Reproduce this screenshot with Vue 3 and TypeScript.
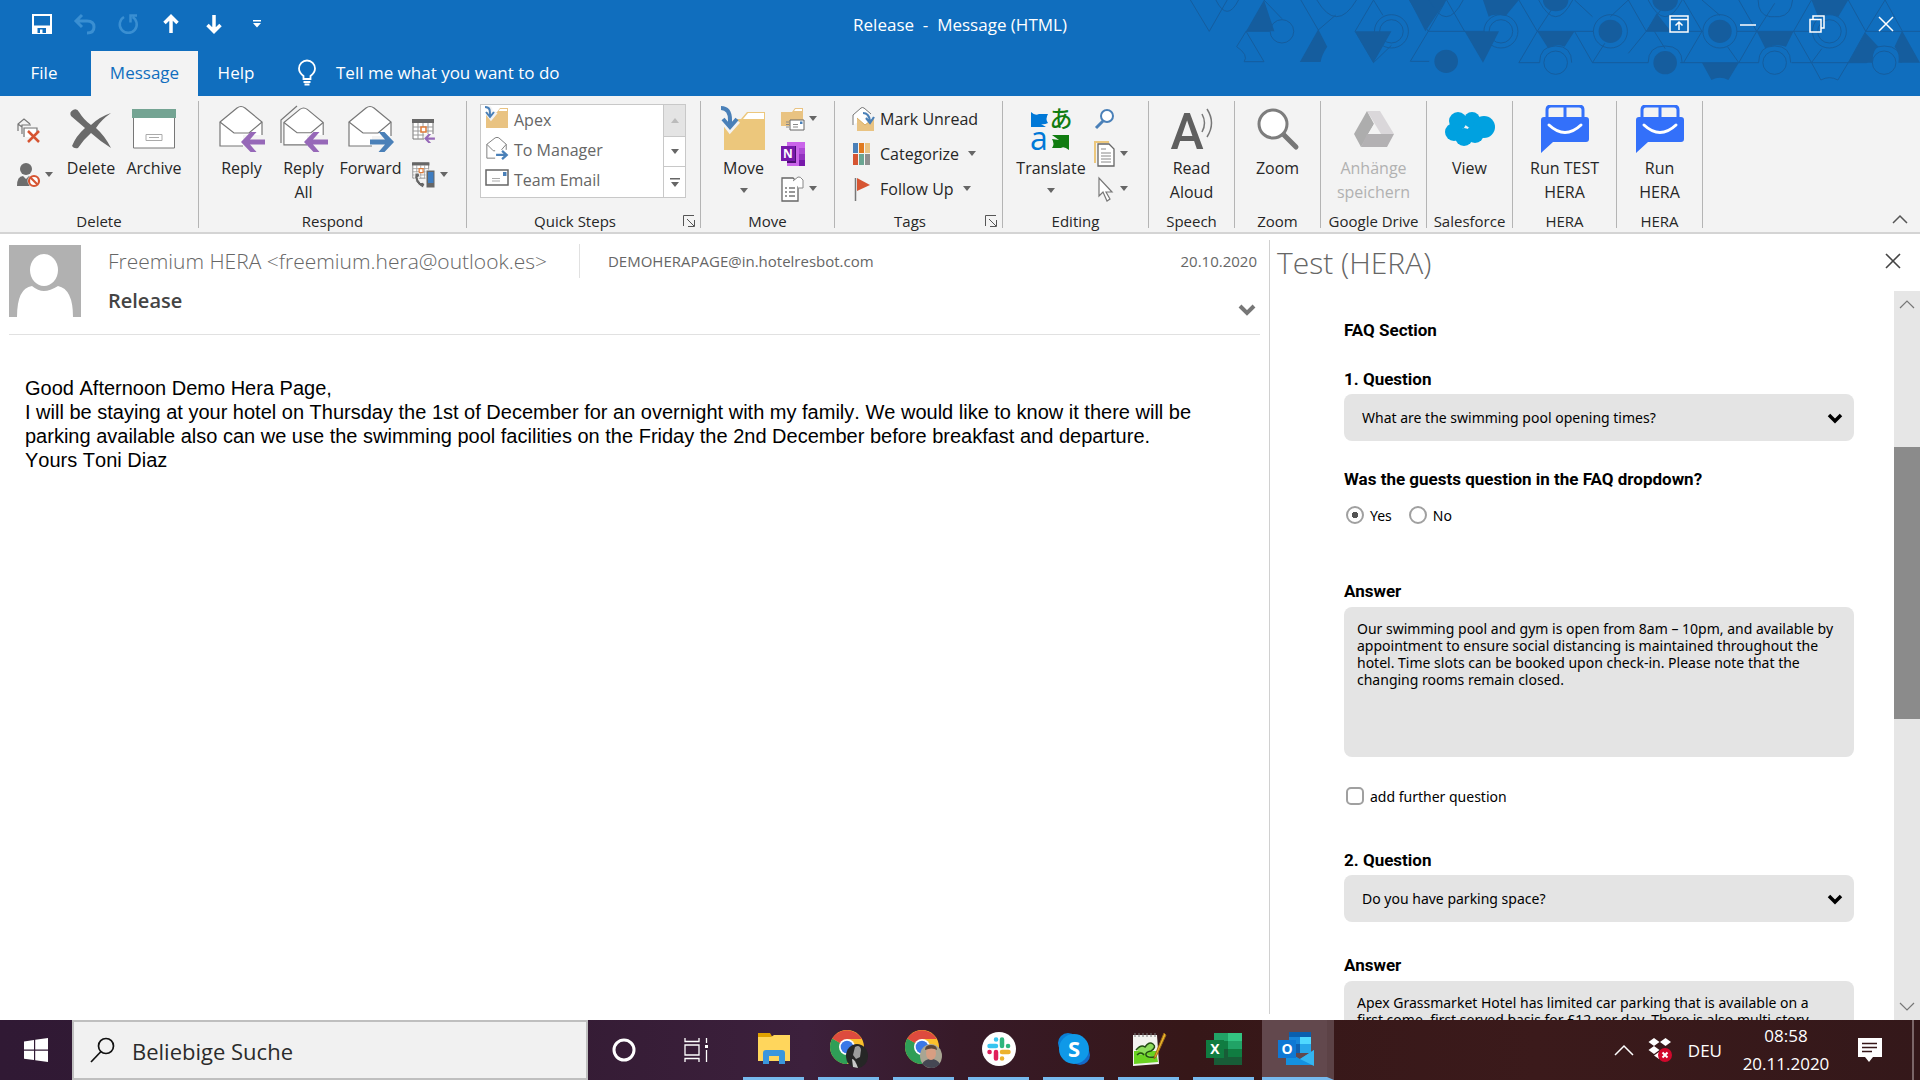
<script setup lang="ts">
import { ref } from 'vue'

interface TaskApp {
  id: string
  label: string
  active?: boolean
}

const quickSteps = [
  { id: 'folder-in', label: 'Apex' },
  { id: 'mail-forward', label: 'To Manager' },
  { id: 'card', label: 'Team Email' },
]

const taskApps: TaskApp[] = [
  { id: 'explorer', label: 'Explorer' },
  { id: 'chrome-a', label: 'Chrome' },
  { id: 'chrome-b', label: 'Chrome' },
  { id: 'slack', label: 'Slack' },
  { id: 'skype', label: 'Skype' },
  { id: 'notepad', label: 'Notepad++' },
  { id: 'excel', label: 'Excel' },
  { id: 'outlook', label: 'Outlook', active: true },
]

const question1 = ref('What are the swimming pool opening times?')
const question2 = ref('Do you have parking space?')
const inFaq = ref('yes')
const addFurther = ref(false)
const answer1 = ref(
  'Our swimming pool and gym is open from 8am – 10pm, and available by\nappointment to ensure social distancing is maintained throughout the\nhotel. Time slots can be booked upon check-in. Please note that the\nchanging rooms remain closed.',
)
const answer2 = ref(
  'Apex Grassmarket Hotel has limited car parking that is available on a\nfirst come, first served basis for £12 per day. There is also multi-story',
)
</script>

<template>
  <svg class="defs" aria-hidden="true">
    <symbol id="arrow-left" viewBox="0 0 24 20">
      <path d="M0 10L9.500 0H15.500L9 7.500H24V12.500H9L15.500 20H9.500Z" fill="#9668b8" />
    </symbol>
    <symbol id="arrow-right" viewBox="0 0 24 20">
      <path d="M24 10L14.500 0H8.500L15 7.500H0V12.500H15L8.500 20H14.500Z" fill="#4a80b8" />
    </symbol>
    <symbol id="caret" viewBox="0 0 8 5"><path d="M0 0H8L4 5Z" fill="#666" /></symbol>
    <symbol id="launcher" viewBox="0 0 12 12">
      <path d="M.5 11V.5H11M4 4l7 7M11.500 5v6.500H5" fill="none" stroke="#555" />
    </symbol>
    <symbol id="folder-in" viewBox="0 0 24 24">
      <path d="M1 6h11l3-4h8v20H1Z" fill="#e9c382" />
      <path d="M13.500 5l1.500-2h7v2Z" fill="#fff" />
      <path d="M1 1c5 0 5 3 5 9M2 7l4 5 5-6" fill="none" stroke="#f3f3f3" stroke-width="4" />
      <path d="M0 1c5 0 5 3 5 9M1 6l4 5 4-5" fill="none" stroke="#4a80b8" stroke-width="2" />
    </symbol>
    <symbol id="mail-forward" viewBox="0 0 24 26">
      <path d="M1 9L10 2q2-1 4 0l8 7v15H1Z" fill="#fff" stroke="#777" />
      <path d="M1 9l7 7h8l6-7" fill="none" stroke="#777" />
      <path d="M10 15h14v11H10Z" fill="#fff" />
      <path d="M11 20.500h10M17.500 16l5 4.500-5 4.500" fill="none" stroke="#4a80b8" stroke-width="2.500" />
    </symbol>
    <symbol id="card" viewBox="0 0 24 20">
      <path d="M1 2h22v15H1Z" fill="#fff" stroke="#666" stroke-width="1.500" />
      <path d="M7 10.500h8M7 13h8" stroke="#aaa" />
      <path d="M18 4h3.500v4H18Z" fill="#4a80b8" />
    </symbol>
    <symbol id="envelope" viewBox="0 0 46 48">
      <path d="M1 17L18 3q4-3 8 0l17 14v24H1Z" fill="#fff" stroke="#777" stroke-width="1.200" />
      <path d="M1 17l14 11h15l13-11" fill="none" stroke="#777" stroke-width="1.200" />
    </symbol>
    <symbol id="hera" viewBox="0 0 48 48">
      <path d="M6 13V5q0-4 4-4h28q4 0 4 4v8" fill="none" stroke="#3370fa" stroke-width="3" />
      <path d="M24 1v12" stroke="#3370fa" stroke-width="3" />
      <path d="M3 12h42q3 0 3 3v19q0 3-3 3H12L0 48V15q0-3 3-3Z" fill="#3370fa" />
      <path d="M8 20q16 15 32 0" fill="none" stroke="#fff" stroke-width="3" stroke-linecap="round" />
    </symbol>
    <symbol id="calendar" viewBox="0 0 24 22">
      <path d="M1 1h20v19H1Z" fill="#fff" stroke="#777" />
      <path d="M1 8h20M1 12h20M1 16h20M6 4v16M11 4v16M16 4v16" stroke="#999" />
      <path d="M0 0h22v4H0Z" fill="#666" />
      <path d="M9 8h5v5H9Z" fill="#fff" stroke="#e07b39" stroke-width="1.500" />
    </symbol>
    <symbol id="chrome" viewBox="0 0 34 34">
      <circle cx="17" cy="17" r="17" fill="#fbc02d" />
      <path d="M17 17L2.300 8.500A17 17 0 0 0 17 34l7-12Z" fill="#2f9e57" />
      <path d="M2.300 8.500A17 17 0 0 1 31.700 9H17v8Z" fill="#dd4b3e" />
      <circle cx="17" cy="17" r="8" fill="#fff" />
      <circle cx="17" cy="17" r="6.300" fill="#3b78e7" />
    </symbol>
  </svg>

  <div class="app">
    <header class="top">
      <svg class="pattern" viewBox="0 0 1568 288" preserveAspectRatio="none" aria-hidden="true">
        <g fill="#155d9e">
          <path d="M178 0L140 94H200ZM293 88L254 186H298Q300 165 312 140ZM371 94H448L410 188ZM486 0H565L520 94ZM603 94H676L642 188ZM642 0H718L690 48Q664 40 654 50ZM757 94H836L815 140Q796 130 780 145ZM1010 40L988 94H1040ZM1222 94H1300L1284 140Q1260 130 1240 145ZM1338 0H1416L1395 50Q1376 35 1352 50ZM1452 98L1416 188H1468Q1466 150 1480 140ZM1530 92L1514 140Q1526 160 1522 188H1568ZM1106 188H1184L1162 240Q1144 226 1126 240Z" />
          <ellipse cx="564" cy="184" rx="25" ry="35" />
          <ellipse cx="912" cy="94" rx="25" ry="35" />
          <ellipse cx="1028" cy="188" rx="25" ry="35" />
          <ellipse cx="1144" cy="94" rx="25" ry="35" />
          <ellipse cx="796" cy="0" rx="27" ry="34" />
          <ellipse cx="1028" cy="0" rx="27" ry="34" />
        </g>
        <g class="pattern-lines" fill="none" stroke="#155d9e">
          <path d="M22 0L62 94L100 0M178 0L216 56M256 0L293 90L330 45M410 0L371 94L410 188L448 136M486 0L526 94L488 184H528M410 0L430 46M526 94L560 10M526 94H645M565 0L603 94M718 0L757 94L718 188H762M757 94H876M836 0L874 50M757 94L796 10M950 0L988 94L950 160M950 0L912 50M988 94L1028 10M988 94H1108M836 94L874 188H992M874 188L900 130M1028 146L1005 94M1060 188H1226M1106 0L1144 46M1067 0L1106 94L1067 188M1180 94H1340M1184 0L1222 94L1184 188L1160 140M1222 94L1260 10M1300 94L1338 188H1296M1338 0L1300 94M1338 188H1455M1338 188L1360 146M1416 0L1453 94L1416 188L1394 240Q1376 226 1358 240L1338 188M1494 0L1453 94H1568M1494 0L1530 92M140 94L120 140Q146 165 136 185H178L140 94H190" />
          <ellipse cx="216" cy="94" rx="25" ry="35" />
          <ellipse cx="448" cy="94" rx="25" ry="35" />
          <ellipse cx="448" cy="94" rx="36" ry="50" />
          <ellipse cx="680" cy="94" rx="25" ry="35" />
          <ellipse cx="680" cy="94" rx="36" ry="50" />
          <ellipse cx="912" cy="94" rx="36" ry="50" />
          <ellipse cx="1144" cy="94" rx="36" ry="50" />
          <ellipse cx="1376" cy="94" rx="25" ry="35" />
          <ellipse cx="1376" cy="94" rx="36" ry="50" />
          <ellipse cx="796" cy="188" rx="25" ry="35" />
          <ellipse cx="1260" cy="188" rx="25" ry="35" />
          <ellipse cx="1492" cy="188" rx="25" ry="35" />
          <path d="M76 0q24 68 48 0M290 0q42 100 84 0M528 0q36 100 72 0M760 0q36 100 72 0M992 0q36 100 72 0M1225 0q0 45 25 50q-5 0 20 0q25-5 28-50M762 188q0-50 34-50t34 50M992 188q0-50 36-50t36 50M1226 188q0-50 34-50t34 50M1456 188q0-50 36-50t36 50" />
        </g>
      </svg>

      <div class="title-row">
        <div class="qat">
          <button aria-label="Save"><svg width="20" height="20" viewBox="0 0 20 20"><path d="M1 1h18v18H1Z" fill="none" stroke="#fff" stroke-width="2" /><path d="M1 11.500h18V19H1Z" fill="#fff" /><path d="M5.500 14h8.500v5H5.500Z" fill="#106ebe" /><path d="M8 15.500h2.500V19H8Z" fill="#fff" /></svg></button>
          <button aria-label="Undo"><svg width="22" height="20" viewBox="0 0 22 20"><path d="M8 1L2 7l6 6M2 7h11q7 0 7 6t-7 6" fill="none" stroke="#3a8fd2" stroke-width="3" /></svg></button>
          <button aria-label="Redo"><svg width="20" height="20" viewBox="0 0 20 20"><path d="M6 3A8.500 8.500 0 1 0 14.500 3M19 1.500h-6.500v7" fill="none" stroke="#3a8fd2" stroke-width="2.500" /></svg></button>
          <button aria-label="Previous"><svg width="16" height="20" viewBox="0 0 16 20"><path d="M8 19V4M1.500 9L8 2.500 14.500 9" fill="none" stroke="#fff" stroke-width="3.500" /></svg></button>
          <button aria-label="Next"><svg width="16" height="20" viewBox="0 0 16 20"><path d="M8 1v15M1.500 11L8 17.500l6.500-6.500" fill="none" stroke="#fff" stroke-width="3.500" /></svg></button>
          <button aria-label="Customize"><svg width="8" height="8" viewBox="0 0 8 8"><path d="M0 0h8v1.500H0ZM0 3h8L4 7.500Z" fill="#fff" /></svg></button>
        </div>
        <h1 class="window-title">Release&nbsp; -&nbsp; Message (HTML)</h1>
        <div class="window-buttons">
          <button aria-label="Ribbon options"><svg width="20" height="18" viewBox="0 0 20 18"><path d="M1 1h18v16H1ZM1 4.500h18M10 15V7.500M6.500 10.500L10 7l3.500 3.500" fill="none" stroke="#fff" stroke-width="1.500" /></svg></button>
          <button aria-label="Minimize"><svg width="16" height="18" viewBox="0 0 16 18"><path d="M0 10h16" stroke="#fff" stroke-width="1.500" /></svg></button>
          <button aria-label="Restore"><svg width="16" height="18" viewBox="0 0 16 18"><path d="M1 4.500h11V17H1ZM4 4V1h11v12h-3" fill="none" stroke="#fff" stroke-width="1.500" /></svg></button>
          <button aria-label="Close"><svg width="16" height="16" viewBox="0 0 16 16"><path d="M1 1l14 14M15 1L1 15" stroke="#fff" stroke-width="1.500" /></svg></button>
        </div>
      </div>

      <nav class="tabs">
        <button class="tab file">File</button>
        <button class="tab selected">Message</button>
        <button class="tab help">Help</button>
        <button class="tell">
          <svg width="18" height="26" viewBox="0 0 18 26"><path d="M5.500 19v-3Q1 12.500 1 8.500a8 8 0 0 1 16 0q0 4-4.500 7.500v3ZM5.500 22h7M6.500 24.500h5" fill="none" stroke="#fff" stroke-width="1.800" /></svg>
          <span>Tell me what you want to do</span>
        </button>
      </nav>
    </header>

    <section class="ribbon">
      <div class="group g-delete">
        <div class="tools">
          <div class="stack two">
            <button aria-label="Ignore"><svg width="24" height="26" viewBox="0 0 24 26"><path d="M1 14V7l6-5 6 5M1 7l4 3M5 17V8h9M7 20v-9h13v4" fill="none" stroke="#777" stroke-width="1.200" /><path d="M8 12h11v8H8Z" fill="#fff" /><path d="M11 14l11 11M22 14L11 25" stroke="#d65532" stroke-width="2.500" /></svg></button>
            <button aria-label="Junk"><svg width="24" height="26" viewBox="0 0 24 26"><circle cx="9" cy="7" r="6" fill="#6d6d6d" /><path d="M0 24q0-10 6-10l3 3 3-3q5 0 5 10Z" fill="#6d6d6d" /><circle cx="17" cy="19" r="6.500" fill="#f3f3f3" /><circle cx="17" cy="19" r="5" fill="#fff" stroke="#d65532" stroke-width="2.200" /><path d="M13.500 15.500l7 7" stroke="#d65532" stroke-width="2.200" /></svg><svg class="caret"><use href="#caret" /></svg></button>
          </div>
          <button class="big w66"><svg width="42" height="40" viewBox="0 0 42 40"><path d="M3 1q4-2 6 2 5 8 12 13Q29 8 41 4 31 11 26 19q9 8 15 20Q31 33 21 24 13 31 8 39q-4 1-6-2Q6 27 15 19 8 13 1 7q-2-4 2-6Z" fill="#6a6a6a" /></svg><span>Delete</span></button>
          <button class="big w60"><svg width="44" height="40" viewBox="0 0 44 40"><path d="M1.500 8h41v31h-41Z" fill="#fff" stroke="#777" /><path d="M0 0h44v9H0Z" fill="#74a493" /><path d="M14 25.500h16v6H14Z" fill="#fff" stroke="#aaa" /><path d="M17 28.500h10" stroke="#aaa" /></svg><span>Archive</span></button>
        </div>
        <div class="caption">Delete</div>
      </div>

      <div class="group g-respond">
        <div class="tools">
          <button class="big w61"><svg width="46" height="48" viewBox="0 0 46 48"><use href="#envelope" width="46" height="48" /><path d="M24 30h20v14H24Z" fill="#f3f3f3" /><use href="#arrow-left" x="22" y="27" width="24" height="20" /></svg><span>Reply</span></button>
          <button class="big w63"><svg width="48" height="48" viewBox="0 0 48 48"><path d="M1 38V15L17 1" fill="none" stroke="#777" stroke-width="1.200" /><use href="#envelope" x="3" y="1" width="43" height="46" /><path d="M27 30h20v14H27Z" fill="#f3f3f3" /><use href="#arrow-left" x="24" y="27" width="24" height="20" /></svg><span>Reply<br />All</span></button>
          <button class="big w71"><svg width="46" height="48" viewBox="0 0 46 48"><use href="#envelope" width="46" height="48" /><path d="M24 31h20v12H24Z" fill="#f3f3f3" /><use href="#arrow-right" x="22" y="27" width="24" height="20" /></svg><span>Forward</span></button>
          <div class="stack two respond-stack">
            <button aria-label="Meeting"><svg width="24" height="26" viewBox="0 0 24 26"><use href="#calendar" y="2" width="24" height="22" /><path d="M12 17h12v9H12Z" fill="#f3f3f3" /><use href="#arrow-left" x="12" y="17" width="11" height="9" /></svg></button>
            <button aria-label="More"><svg width="24" height="28" viewBox="0 0 24 28"><use href="#calendar" x="0" y="1" width="19" height="18" /><path d="M3 12q-2 10 8 15l2-4-3-2-1 1q-3-3-3-6h2l-1-4Z" fill="#666" stroke="#f3f3f3" /><path d="M14 9h9v18h-9Z" fill="#666" stroke="#f3f3f3" /><path d="M16 11h5.500v11H16Z" fill="#3f7dc0" /></svg><svg class="caret"><use href="#caret" /></svg></button>
          </div>
        </div>
        <div class="caption">Respond</div>
      </div>

      <div class="group g-quick">
        <div class="tools">
          <div class="gallery">
            <ul>
              <li v-for="step in quickSteps" :key="step.id">
                <button><svg width="24" height="24"><use :href="'#' + step.id" /></svg><span>{{ step.label }}</span></button>
              </li>
            </ul>
            <div class="gallery-nav">
              <button class="off" aria-label="Scroll up"><svg width="8" height="5" viewBox="0 0 8 5"><path d="M0 5h8L4 0Z" fill="#bbb" /></svg></button>
              <button aria-label="Scroll down"><svg width="8" height="5"><use href="#caret" /></svg></button>
              <button aria-label="More steps"><svg width="10" height="9" viewBox="0 0 10 9"><path d="M0 0h10v1.500H0ZM1 4h8L5 9Z" fill="#666" /></svg></button>
            </div>
          </div>
        </div>
        <div class="caption with-launcher"><span>Quick Steps</span><button aria-label="Quick Steps settings"><svg width="12" height="12"><use href="#launcher" /></svg></button></div>
      </div>

      <div class="group g-move">
        <div class="tools">
          <button class="big w61"><svg width="46" height="46" viewBox="0 0 46 46"><path d="M3 13h17l6-7h18v38H3Z" fill="#ecc77c" /><path d="M22 13l5-6h16v6Z" fill="#fff" /><path d="M1 2q8 0 8 12v6M3 14l6 8 7-8" fill="none" stroke="#f3f3f3" stroke-width="8" /><path d="M0 2q9 0 9 12v6M2 13l7 8 7-8" fill="none" stroke="#4a80b8" stroke-width="4" /></svg><span>Move</span><svg class="caret"><use href="#caret" /></svg></button>
          <div class="stack three">
            <button aria-label="Rules"><svg width="24" height="24" viewBox="0 0 24 24"><path d="M0 5h11l3-4h8v18H0Z" fill="#e9c382" /><path d="M13 4l1.500-2H21v2Z" fill="#fff" /><path d="M9 13h14v10H9Z" fill="#fff" stroke="#666" /><path d="M12 17.500h5M12 20h5M5 15h3M5 17.500h3M5 20h3" stroke="#888" /><path d="M19 14.500h2.500v2.500H19Z" fill="#4a80b8" /></svg><svg class="caret"><use href="#caret" /></svg></button>
            <button aria-label="OneNote"><svg width="24" height="24" viewBox="0 0 24 24"><path d="M6 0h18v24H6Z" fill="#ca64ea" /><path d="M18 6h6v6h-6Z" fill="#ae4bd5" /><path d="M18 12h6v6h-6Z" fill="#9332bf" /><path d="M18 18h6v6h-6Z" fill="#7719aa" /><path d="M6 4h9v17H6Z" fill="#4c0d74" /><path d="M0 4h14v15H0Z" fill="#7719aa" /><text x="7" y="16" class="icon-letter" font-size="12">N</text></svg></button>
            <button aria-label="Actions"><svg width="24" height="26" viewBox="0 0 24 26"><path d="M1 2h11l5 5v18H1Z" fill="#fff" stroke="#666" stroke-width="1.300" /><path d="M8 12h6M8 16h6M8 20h6M4 12h2M4 16h2M4 20h2" stroke="#777" stroke-width="1.500" /><path d="M12 5l5-4q2-1 5 3v8h-4" fill="#fff" stroke="#888" /></svg><svg class="caret"><use href="#caret" /></svg></button>
          </div>
        </div>
        <div class="caption">Move</div>
      </div>

      <div class="group g-tags">
        <div class="tools">
          <div class="stack three text-rows">
            <button><svg width="24" height="26" viewBox="0 0 24 26"><path d="M2 19V9l8-7q1-1 3 0l7 6" fill="#fff" stroke="#777" /><path d="M6 12h17v13H6Z" fill="#e9c382" /><path d="M6 12l8 7 9-7" fill="#fff" stroke="#d9ad62" /><path d="M12 7q6 0 7 8M15 12l4 5 4-6" fill="none" stroke="#4a80b8" stroke-width="2.200" /></svg><span>Mark Unread</span></button>
            <button><svg width="24" height="24" viewBox="0 0 24 24"><path d="M2 1h5v10H2Z" fill="#4a80b8" /><path d="M8 1h5v10H8Z" fill="#e07a1f" /><path d="M14 1h5v10h-5Z" fill="#e9c382" /><path d="M2 12h5v11H2Z" fill="#d65532" /><path d="M8 12h5v11H8Z" fill="#6aa592" /><path d="M14 12h5v11h-5Z" fill="#8f8f8f" /></svg><span>Categorize</span><svg class="caret"><use href="#caret" /></svg></button>
            <button><svg width="24" height="24" viewBox="0 0 24 24"><path d="M4.500 1v23" stroke="#777" stroke-width="1.500" /><path d="M6 1l13 7-13 6Z" fill="#d65532" /></svg><span>Follow Up</span><svg class="caret"><use href="#caret" /></svg></button>
          </div>
        </div>
        <div class="caption with-launcher"><span>Tags</span><button aria-label="Tags settings"><svg width="12" height="12"><use href="#launcher" /></svg></button></div>
      </div>

      <div class="group g-editing">
        <div class="tools">
          <button class="big w72"><svg width="42" height="46" viewBox="0 0 42 46"><path d="M1 6q4 4 8 2h9q-3 5 0 9-4 2-7 1l5 3H1Z" fill="#0078d7" /><text x="31" y="21" text-anchor="middle" font-family="Noto Sans CJK JP" font-weight="500" font-size="23" fill="#107c10">あ</text><text x="9" y="44" text-anchor="middle" font-family="Open Sans" font-weight="400" font-size="32" fill="#0078d7">a</text><path d="M22 29h17v15q-5-4-8-2h-9q3-4 0-9l7 1Z" fill="#107c10" /></svg><span>Translate</span><svg class="caret"><use href="#caret" /></svg></button>
          <div class="stack three">
            <button aria-label="Find"><svg width="22" height="22" viewBox="0 0 22 22"><circle cx="13" cy="8" r="6" fill="#fff" stroke="#4a80b8" stroke-width="2" /><path d="M9 13l-7 7" stroke="#4a80b8" stroke-width="3" /></svg></button>
            <button aria-label="Related"><svg width="22" height="26" viewBox="0 0 22 26"><path d="M1 22V1h14" fill="none" stroke="#ecc77c" stroke-width="2" /><path d="M4 3h11l5 5v17H4Z" fill="#fff" stroke="#666" stroke-width="1.300" /><path d="M7 8h5M7 12h10M7 15h10M7 18h10M7 21h10" stroke="#888" /></svg><svg class="caret"><use href="#caret" /></svg></button>
            <button aria-label="Select"><svg width="22" height="26" viewBox="0 0 22 26"><path d="M5 2v18l4-4 4 9 3-2-4-7h6Z" fill="#fff" stroke="#777" stroke-width="1.200" /></svg><svg class="caret"><use href="#caret" /></svg></button>
          </div>
        </div>
        <div class="caption">Editing</div>
      </div>

      <div class="group g-86">
        <div class="tools">
          <button class="big fill"><svg width="44" height="48" viewBox="0 0 44 48"><text x="17" y="44" text-anchor="middle" font-family="Roboto" font-weight="500" font-size="50" fill="#5f5f5f">A</text><path d="M32 9q5 9 0 18M37 4q9 14 0 28" fill="none" stroke="#777" stroke-width="1.500" /></svg><span>Read<br />Aloud</span></button>
        </div>
        <div class="caption">Speech</div>
      </div>
      <div class="group g-86">
        <div class="tools">
          <button class="big fill"><svg width="42" height="42" viewBox="0 0 42 42"><path d="M25 25l14 14" stroke="#777" stroke-width="5" stroke-linecap="round" /><circle cx="16" cy="16" r="14" fill="#fff" stroke="#7d7d7d" stroke-width="3" /></svg><span>Zoom</span></button>
        </div>
        <div class="caption">Zoom</div>
      </div>
      <div class="group g-106">
        <div class="tools">
          <button class="big fill" disabled><svg width="42" height="38" viewBox="0 0 42 38"><path d="M14 1L1 24l7 13 13-23Z" fill="#adadad" /><path d="M14 1h13l14 23H28Z" fill="#dad7da" /><path d="M14 24h27l-7 13H8Z" fill="#b3b1b3" /><path d="M21 14l6 10H15Z" fill="#f3f3f3" /></svg><span>Anhänge<br />speichern</span></button>
        </div>
        <div class="caption">Google Drive</div>
      </div>
      <div class="group g-86">
        <div class="tools">
          <button class="big fill"><svg width="50" height="36" viewBox="0 0 50 36"><g fill="#00a1e0"><circle cx="13" cy="10" r="9" /><circle cx="27" cy="9" r="8" /><circle cx="39" cy="16" r="11" /><circle cx="9" cy="21" r="9" /><circle cx="19" cy="26" r="9" /><circle cx="30" cy="23" r="9" /></g></svg><span>View</span></button>
        </div>
        <div class="caption">Salesforce</div>
      </div>
      <div class="group g-104">
        <div class="tools">
          <button class="big fill"><svg width="48" height="48"><use href="#hera" /></svg><span>Run TEST<br />HERA</span></button>
        </div>
        <div class="caption">HERA</div>
      </div>
      <div class="group g-86">
        <div class="tools">
          <button class="big fill"><svg width="48" height="48"><use href="#hera" /></svg><span>Run<br />HERA</span></button>
        </div>
        <div class="caption">HERA</div>
      </div>
      <button class="collapse" aria-label="Collapse ribbon"><svg width="16" height="10" viewBox="0 0 16 10"><path d="M1 9l7-7 7 7" fill="none" stroke="#555" stroke-width="1.500" /></svg></button>
    </section>

    <main class="content">
      <article class="mail">
        <header class="mail-head">
          <svg class="avatar" width="72" height="72" viewBox="0 0 72 72"><path d="M0 0h72v72H0Z" fill="#b1b1b1" /><ellipse cx="35" cy="25" rx="14" ry="16" fill="#fff" /><path d="M8 72q0-29 15-31 6 5 12 5t14-5q15 3 15 31Z" fill="#fff" /></svg>
          <div class="mail-info">
            <div class="mail-line">
              <span class="sender">Freemium HERA &lt;freemium.hera@outlook.es&gt;</span>
              <span class="recipient">DEMOHERAPAGE@in.hotelresbot.com</span>
              <time>20.10.2020</time>
            </div>
            <div class="mail-line second">
              <h2>Release</h2>
              <button aria-label="Expand header"><svg width="18" height="12" viewBox="0 0 18 12"><path d="M2 2l7 7 7-7" fill="none" stroke="#777" stroke-width="4" /></svg></button>
            </div>
          </div>
        </header>
        <p class="mail-body">
          Good Afternoon Demo Hera Page,<br />
          I will be staying at your hotel on Thursday the 1st of December for an overnight with my family. We would like to know it there will be<br />
          parking available also can we use the swimming pool facilities on the Friday the 2nd December before breakfast and departure.<br />
          Yours Toni Diaz
        </p>
      </article>

      <aside class="pane">
        <div class="pane-head">
          <h2>Test (HERA)</h2>
          <button aria-label="Close pane"><svg width="16" height="16" viewBox="0 0 16 16"><path d="M1 1l14 14M15 1L1 15" stroke="#444" stroke-width="1.600" /></svg></button>
        </div>
        <div class="pane-body">
          <form class="faq" @submit.prevent>
            <h3>FAQ Section</h3>
            <label class="heading question" for="q1">1. Question</label>
            <div class="select">
              <select id="q1" v-model="question1"><option>What are the swimming pool opening times?</option></select>
              <svg width="16" height="12" viewBox="0 0 16 12"><path d="M2 2l6 6 6-6" fill="none" stroke="#000" stroke-width="3.500" /></svg>
            </div>
            <fieldset>
              <legend class="heading">Was the guests question in the FAQ dropdown?</legend>
              <label><input v-model="inFaq" type="radio" name="faq" value="yes" />Yes</label>
              <label><input v-model="inFaq" type="radio" name="faq" value="no" />No</label>
            </fieldset>
            <label class="heading" for="a1">Answer</label>
            <textarea id="a1" v-model="answer1" spellcheck="false"></textarea>
            <label class="further"><input v-model="addFurther" type="checkbox" />add further question</label>
            <label class="heading" for="q2">2. Question</label>
            <div class="select">
              <select id="q2" v-model="question2"><option>Do you have parking space?</option></select>
              <svg width="16" height="12" viewBox="0 0 16 12"><path d="M2 2l6 6 6-6" fill="none" stroke="#000" stroke-width="3.500" /></svg>
            </div>
            <label class="heading answer2" for="a2">Answer</label>
            <textarea id="a2" v-model="answer2" spellcheck="false"></textarea>
          </form>
          <div class="scrollbar">
            <svg width="16" height="10" viewBox="0 0 16 10"><path d="M1 9l7-7 7 7" fill="none" stroke="#777" stroke-width="1.200" /></svg>
            <div class="track"><div class="thumb"></div></div>
            <svg width="16" height="10" viewBox="0 0 16 10"><path d="M1 1l7 7 7-7" fill="none" stroke="#777" stroke-width="1.200" /></svg>
          </div>
        </div>
      </aside>
    </main>

    <footer class="taskbar">
      <button class="start" aria-label="Start"><svg width="24" height="24" viewBox="0 0 24 24"><path d="M0 3.500l10-1.500v9.500H0ZM11.200 1.800L24 0v11.500H11.200ZM0 12.700h10V22L0 20.700ZM11.200 12.700H24V24l-12.800-1.800Z" fill="#fff" /></svg></button>
      <label class="search">
        <svg width="25" height="26" viewBox="0 0 25 26"><circle cx="16" cy="9" r="7.500" fill="none" stroke="#111" stroke-width="1.700" /><path d="M11 14.500L1 25" stroke="#111" stroke-width="1.700" /></svg>
        <input type="text" placeholder="Beliebige Suche" aria-label="Beliebige Suche" />
      </label>
      <button class="sys" aria-label="Cortana"><svg width="26" height="26" viewBox="0 0 26 26"><circle cx="13" cy="13" r="10" fill="none" stroke="#fff" stroke-width="3" /></svg></button>
      <button class="sys" aria-label="Task view"><svg width="26" height="24" viewBox="0 0 26 24"><path d="M2 0v3.500h14V0M2 24v-3.500h14V24M2 7h14v10H2ZM23.500 0v5M23.500 12v12" fill="none" stroke="#fff" stroke-width="1.300" /><path d="M22 7h3v3h-3Z" fill="#fff" /></svg></button>
      <div class="apps">
        <button v-for="app in taskApps" :key="app.id" :class="{ active: app.active }" :aria-label="app.label">
          <svg v-if="app.id === 'explorer'" width="34" height="32" viewBox="0 0 34 32"><path d="M1 0h12l3 5H1Z" fill="#e0a100" /><path d="M1 4h13l3-2h16v26H1Z" fill="#ffd65c" /><path d="M6 31V20q0-3 3-3h16q3 0 3 3v11h-6v-8H12v8Z" fill="#3a96dd" /></svg>
          <svg v-else-if="app.id === 'chrome-a'" width="38" height="38" viewBox="0 0 38 38"><use href="#chrome" width="34" height="34" /><ellipse cx="27" cy="26" rx="11" ry="12" fill="#262626" /><path d="M25 17q5-3 6 3l-1 7-4 2-3-4Z" fill="#9c9c9c" /><path d="M22 29q3 0 6 9l-5-1Z" fill="#c9c9c9" /></svg>
          <svg v-else-if="app.id === 'chrome-b'" width="38" height="38" viewBox="0 0 38 38"><use href="#chrome" width="34" height="34" /><ellipse cx="26" cy="26" rx="11" ry="12" fill="#a8a593" /><path d="M17 34q3-5 9-5t9 5q-8 8-18 0Z" fill="#454753" /><ellipse cx="26" cy="23" rx="5" ry="7" fill="#d79e82" /><path d="M20 20q0-5 6-5t6 5q-5-3-12 0Z" fill="#5b4639" /></svg>
          <svg v-else-if="app.id === 'slack'" width="34" height="34" viewBox="0 0 34 34"><circle cx="17" cy="17" r="17" fill="#fff" /><g stroke-width="4.500" stroke-linecap="round"><path d="M7.500 14h6.500M14 7.500h.1" stroke="#36c5f0" /><path d="M20 7.500v6.500M26 14h.1" stroke="#2eb67d" /><path d="M20 20h6.500M20 26.500h.1" stroke="#ecb22e" /><path d="M14 20v6.500M7.500 20h.1" stroke="#e01e5a" /></g></svg>
          <svg v-else-if="app.id === 'skype'" width="34" height="34" viewBox="0 0 34 34"><circle cx="11" cy="11" r="10" fill="#0a7fd6" /><circle cx="23" cy="23" r="10" fill="#1468c7" /><circle cx="17" cy="17" r="15" fill="#0f99e8" /><text x="17" y="25" class="icon-letter" font-size="22">S</text></svg>
          <svg v-else-if="app.id === 'notepad'" width="34" height="34" viewBox="0 0 34 34"><path d="M1 3h24l2 29-26 2Z" fill="#f3f3ef" /><path d="M2 19h22l2 11-24 2Z" fill="#6bd322" /><path d="M4 18q5-6 9-3 4-6 8-3t-2 7q-6 1-5 4t8 2M5 23q4-4 7 0" fill="#8cdb5c" stroke="#234d13" stroke-width="1.500" /><path d="M3 1v4M7 1v4M11 1v4M15 1v4M19 1v4M23 1v4" stroke="#777" /><path d="M32 1l2 2-10 22-2 2 1-4Z" fill="#e9b62c" stroke="#a06a16" /></svg>
          <svg v-else-if="app.id === 'excel'" width="36" height="34" viewBox="0 0 36 34"><path d="M8 1h14v32H8Z" fill="#21a366" /><path d="M22 1h14v8H22Z" fill="#33c481" /><path d="M8 9h14v8H8Z" fill="#107c41" /><path d="M22 9h14v8H22Z" fill="#21a366" /><path d="M8 17h28v16H8Z" fill="#185c37" /><path d="M22 17h14v8H22Z" fill="#107c41" /><path d="M0 8h18v18H0Z" fill="#107c41" /><text x="9" y="22" class="icon-letter" font-size="14">X</text></svg>
          <svg v-else width="36" height="34" viewBox="0 0 36 34"><path d="M11 0h22v20H11Z" fill="#0a5fae" /><path d="M11 5h11v7H11Z" fill="#1784d8" /><path d="M22 5h11v7H22Z" fill="#50d9ff" /><path d="M11 12h11v9H11Z" fill="#0f5fb0" /><path d="M22 12h11v9H22Z" fill="#28a8ea" /><path d="M8 19l14 8 14-9v15H8Z" fill="#1490df" /><path d="M22 27l14 7V18Z" fill="#34b5f0" /><path d="M0 8h18v18H0Z" fill="#0f78d4" /><text x="9" y="22" class="icon-letter" font-size="14">O</text></svg>
        </button>
      </div>
      <div class="tray">
        <button aria-label="Hidden icons"><svg width="20" height="12" viewBox="0 0 20 12"><path d="M1 11l9-9 9 9" fill="none" stroke="#fff" stroke-width="1.500" /></svg></button>
        <button class="dropbox" aria-label="Dropbox"><svg width="24" height="24" viewBox="0 0 24 24"><path d="M6 0l5.500 4L6 8 .5 4ZM17.500 0L23 4l-5.500 4L12 4ZM6 8l5.500 4L6 16 .5 12ZM6 17.500l5-3.500v7Z" fill="#fff" /><circle cx="17" cy="17" r="7" fill="#d1082c" /><path d="M14.500 14.500l5 5M19.500 14.500l-5 5" stroke="#fff" stroke-width="2" /></svg></button>
        <span class="lang">DEU</span>
        <div class="clock"><span>08:58</span><span>20.11.2020</span></div>
        <button class="notice" aria-label="Notifications"><svg width="24" height="24" viewBox="0 0 24 24"><path d="M0 0h24v19H15l-4 5-4-5H0Z" fill="#fff" /><path d="M4 5.500h15M4 9.500h15M4 13.500h10" stroke="#371718" stroke-width="1.500" /></svg></button>
        <div class="peek"></div>
      </div>
    </footer>
  </div>
</template>

<style>
body {
  margin: 0;
}
</style>

<style scoped>
* {
  box-sizing: border-box;
}
.defs {
  position: absolute;
  width: 0;
  height: 0;
}
.app {
  display: flex;
  flex-direction: column;
  height: 100vh;
  overflow: hidden;
  background: #fff;
  color: #262626;
  font-family: 'Open Sans', 'Noto Sans', sans-serif;
  font-size: 16px;
}
button {
  padding: 0;
  border: 0;
  background: none;
  color: inherit;
  font: inherit;
}
svg {
  flex: none;
  overflow: visible;
}
h1,
h2,
h3,
p,
ul {
  margin: 0;
  padding: 0;
  font-weight: 400;
}
.icon-letter {
  fill: #fff;
  font-family: 'Open Sans', sans-serif;
  font-weight: 700;
  text-anchor: middle;
}
.caret {
  width: 8px;
  height: 5px;
}

/* Title bar and tabs */
.top {
  position: relative;
  flex: none;
  background: #106ebe;
  color: #fff;
  font-size: 17px;
}
.pattern {
  position: absolute;
  top: 0;
  right: 0;
  width: 740px;
  height: 96px;
  overflow: hidden;
}
.pattern-lines * {
  vector-effect: non-scaling-stroke;
}
.title-row {
  position: relative;
  display: grid;
  grid-template-columns: 1fr auto 1fr;
  align-items: center;
  height: 48px;
}
.qat {
  display: flex;
  padding-left: 20px;
}
.qat button {
  display: grid;
  place-items: center;
  width: 43px;
  height: 48px;
}
.window-title {
  font-size: 17px;
}
.window-buttons {
  display: flex;
  justify-content: flex-end;
}
.window-buttons button {
  display: grid;
  place-items: center;
  width: 69px;
  height: 46px;
}
.tabs {
  position: relative;
  display: flex;
  align-items: flex-end;
  height: 48px;
}
.tab {
  height: 45px;
  padding-bottom: 3px;
}
.file {
  width: 91px;
  padding-right: 3px;
}
.selected {
  width: 107px;
  background: #f3f3f3;
  color: #106ebe;
}
.help {
  width: 76px;
}
.tell {
  display: flex;
  align-items: center;
  gap: 20px;
  height: 45px;
  padding: 0 0 2px 24px;
}

/* Ribbon */
.ribbon {
  display: flex;
  flex: none;
  height: 138px;
  padding-top: 5px;
  border-bottom: 2px solid #d4d4d4;
  background: #f3f3f3;
}
.group {
  display: flex;
  flex: none;
  flex-direction: column;
  height: 127px;
  border-right: 1px solid #b4b4b4;
}
.tools {
  display: flex;
  flex: 1;
}
.caption {
  height: 24px;
  margin-bottom: -5px;
  font-size: 15px;
  line-height: 24px;
  text-align: center;
  white-space: nowrap;
}
.with-launcher {
  display: grid;
  grid-template-columns: 1fr auto;
  align-items: center;
  padding-right: 5px;
}
.with-launcher button {
  display: grid;
}
.g-delete {
  width: 199px;
  padding-left: 17px;
}
.g-delete .caption {
  margin-left: -17px;
}
.g-respond {
  width: 268px;
  padding-left: 12px;
}
.g-respond .caption {
  margin-left: -12px;
}
.g-quick {
  width: 234px;
  padding-left: 13px;
}
.g-quick .caption {
  margin-left: -13px;
}
.g-move {
  width: 134px;
  padding-left: 12px;
}
.g-move .caption {
  margin-left: -12px;
}
.g-tags {
  width: 168px;
  padding-left: 16px;
}
.g-tags .caption {
  margin-left: -16px;
}
.g-editing {
  width: 146px;
  padding-left: 12px;
}
.g-editing .caption {
  margin-left: -12px;
}
.g-86 {
  width: 86px;
}
.g-104 {
  width: 104px;
}
.g-106 {
  width: 106px;
}
.big {
  display: grid;
  grid-template-rows: 55px auto auto;
  align-content: start;
  justify-items: center;
  align-items: center;
  line-height: 24px;
  text-align: center;
}
.big .caret {
  margin-top: 8px;
}
.big:disabled {
  color: #b1b1b1;
}
.w60 {
  width: 60px;
}
.w61 {
  width: 61px;
}
.w63 {
  width: 63px;
}
.w66 {
  width: 66px;
}
.w71 {
  width: 71px;
}
.w72 {
  width: 72px;
}
.fill {
  width: 100%;
}
.stack {
  display: flex;
  flex-direction: column;
}
.stack button {
  display: flex;
  align-items: center;
  gap: 4px;
}
.two {
  width: 41px;
  padding-top: 6px;
}
.two button {
  height: 45px;
}
.respond-stack {
  margin-left: 6px;
}
.three button {
  height: 35px;
}
.three {
  margin-left: 7px;
}
.text-rows {
  margin-left: 0;
}
.text-rows button {
  gap: 5px;
}
.text-rows .caret {
  margin-left: 4px;
}
.gallery {
  display: flex;
  width: 206px;
  height: 94px;
  margin-top: 3px;
  border: 1px solid #c8c8c8;
  background: #fff;
}
.gallery ul {
  flex: 1;
  list-style: none;
}
.gallery li button {
  display: flex;
  align-items: center;
  gap: 5px;
  height: 30px;
  padding-left: 4px;
  color: #666;
}
.gallery li svg {
  margin-bottom: 4px;
}
.gallery-nav {
  display: grid;
  grid-template-rows: 1fr 1fr 1fr;
  width: 22px;
  border-left: 1px solid #c8c8c8;
}
.gallery-nav button {
  display: grid;
  place-items: center;
}
.gallery-nav button + button {
  border-top: 1px solid #c8c8c8;
}
.off {
  background: #e4e4e4;
}
.collapse {
  align-self: flex-end;
  margin: 0 12px 3px auto;
}

/* Mail */
.content {
  display: grid;
  flex: 1;
  grid-template-columns: minmax(0, 1fr) 650px;
  min-height: 0;
}
.mail {
  margin: 6px 0;
  padding: 5px 9px 0;
  border-right: 1px solid #d0d0d0;
}
.mail-head {
  display: flex;
  gap: 27px;
  height: 90px;
  border-bottom: 1px solid #e1e1e1;
}
.mail-info {
  flex: 1;
}
.mail-line {
  display: flex;
  align-items: center;
  height: 32px;
  color: #666;
}
.sender {
  padding-right: 32px;
  font-size: 21px;
  font-weight: 300;
  line-height: 32px;
}
.recipient {
  flex: 1;
  padding-left: 28px;
  border-left: 1px solid #e1e1e1;
  font-size: 15px;
  line-height: 34px;
}
time {
  padding-right: 3px;
  font-size: 15px;
  line-height: 34px;
}
.second {
  justify-content: space-between;
  height: 46px;
  padding-right: 4px;
}
.second h2 {
  color: #444;
  font-size: 20px;
  font-weight: 600;
}
.second button {
  padding-top: 20px;
}
.mail-body {
  padding: 41px 0 0 16px;
  color: #000;
  font-family: 'Liberation Sans', Arial, sans-serif;
  font-kerning: none;
  font-size: 20px;
  line-height: 24px;
  white-space: nowrap;
}

/* Task pane */
.pane {
  display: flex;
  flex-direction: column;
  min-height: 0;
}
.pane-head {
  display: flex;
  flex: none;
  align-items: center;
  justify-content: space-between;
  height: 57px;
  padding: 0 19px 0 7px;
}
.pane-head h2 {
  color: #666;
  font-size: 30px;
  font-weight: 300;
}
.pane-body {
  display: flex;
  flex: 1;
  min-height: 0;
  overflow: hidden;
}
.faq {
  display: flex;
  flex: 1;
  flex-direction: column;
  padding: 27px 40px 0 74px;
  color: #000;
  font-family: 'Noto Sans', 'Open Sans', sans-serif;
  font-size: 14px;
}
.faq > * {
  flex: none;
}
.faq h3,
.heading {
  font-family: 'Roboto', sans-serif;
  font-size: 17px;
  font-weight: 700;
  line-height: 24px;
}
.question {
  margin-top: 25px;
}
.select {
  position: relative;
  height: 47px;
  margin-top: 3px;
}
.select select {
  width: 100%;
  height: 47px;
  padding: 0 18px;
  border: 0;
  border-radius: 8px;
  appearance: none;
  background: #e4e4e4;
  color: #000;
  font: inherit;
}
.select svg {
  position: absolute;
  top: 19px;
  right: 11px;
  pointer-events: none;
}
fieldset {
  display: flex;
  gap: 15px;
  height: 112px;
  margin: 26px 0 0;
  padding: 0;
  border: 0;
}
legend {
  padding: 0;
}
fieldset label,
.further {
  display: flex;
  align-items: center;
  gap: 6px;
  height: 20px;
}
fieldset label {
  margin-top: 14px;
}
fieldset input,
.further input {
  width: 18px;
  height: 18px;
  margin: 0 0 0 2px;
  border: 2px solid #a0a0a0;
  appearance: none;
  background: #fff;
}
fieldset input {
  border-radius: 50%;
}
fieldset input:checked {
  background: radial-gradient(circle, #555 0 3px, #fff 3px);
}
.further {
  margin: 29px 0 42px;
}
.further input {
  border-radius: 5px;
}
.answer2 {
  margin-top: 31px;
}
textarea {
  display: block;
  width: 100%;
  height: 150px;
  margin-top: 4px;
  padding: 13px;
  overflow: hidden;
  border: 0;
  border-radius: 8px;
  background: #e4e4e4;
  color: #000;
  font: inherit;
  line-height: 17px;
  resize: none;
  white-space: pre;
}
.scrollbar {
  display: flex;
  flex: none;
  flex-direction: column;
  align-items: center;
  width: 26px;
  padding: 8px 0;
  background: #e6e6e6;
}
.track {
  display: flex;
  flex: 1;
  flex-direction: column;
  width: 100%;
  padding-top: 138px;
}
.thumb {
  height: 272px;
  background: #8b8b8b;
}

/* Taskbar */
.taskbar {
  display: flex;
  flex: none;
  height: 60px;
  background: linear-gradient(90deg, #301934 0%, #351c35 30%, #3c203c 42%, #371a28 50%, #361718 62%, #3b1a1b 80%, #34181a 100%);
  color: #fff;
}
.taskbar button {
  display: grid;
  place-items: center;
}
.start,
.sys {
  width: 72px;
}
.search {
  display: flex;
  align-items: center;
  gap: 17px;
  width: 516px;
  padding: 0 16px;
  border: 2px solid #bfbfbf;
  background: #f1f1f1;
}
.search input {
  flex: 1;
  min-width: 0;
  padding: 2px 0 0;
  border: 0;
  outline: 0;
  background: none;
  font: inherit;
  font-size: 22px;
}
.search input::placeholder {
  color: #2b2b2b;
}
.apps {
  display: flex;
  gap: 14px;
  margin-left: 11px;
}
.apps button {
  width: 61px;
  border-bottom: 3px solid #76b9ed;
}
.apps .active {
  width: 72px;
  margin-left: -6px;
  padding-left: 3px;
  border-right: 7px solid #5c4246;
  background: #62484d;
}
.tray {
  display: flex;
  align-items: center;
  margin-left: auto;
  font-size: 17px;
}
.dropbox {
  margin-left: 14px;
}
.lang {
  margin-left: 16px;
}
.clock {
  display: flex;
  flex-direction: column;
  align-items: center;
  width: 128px;
  margin-right: 8px;
  line-height: 28px;
}
.notice {
  margin-right: 30px;
}
.peek {
  width: 8px;
  height: 60px;
  border-left: 2px solid #7b6668;
}
</style>
